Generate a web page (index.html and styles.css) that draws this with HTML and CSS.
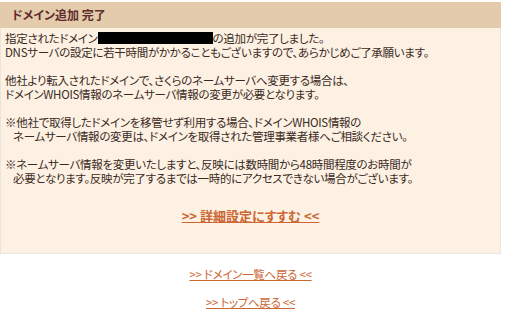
FILE: index.html
```html
<!DOCTYPE html>
<html lang="ja">

<head>
    <meta charset="UTF-8">
    <title>ドメイン追加 完了</title>
    <link rel="stylesheet" href="styles.css">
</head>

<body>
    <div class="result-box">
        <h3 class="result-title">ドメイン追加 完了</h3>
        <div class="result-body">
            <p>指定されたドメイン<span class="masked"></span>の追加が完了しました。<br>
                DNSサーバの設定に若干時間がかかることもございますので、あらかじめご了承願います。</p>
            <p>他社より転入されたドメインで、さくらのネームサーバへ変更する場合は、<br>
                ドメインWHOIS情報のネームサーバ情報の変更が必要となります。</p>
            <p>※他社で取得したドメインを移管せず利用する場合、ドメインWHOIS情報の<br>
                <span class="indent">ネームサーバ情報の変更は、ドメインを取得された管理事業者様へご相談ください。</span></p>
            <p>※ネームサーバ情報を変更いたしますと、反映には数時間から48時間程度のお時間が<br>
                <span class="indent">必要となります。反映が完了するまでは一時的にアクセスできない場合がございます。</span></p>
            <div class="next-step">
                <a href="#" class="next-link">&gt;&gt; 詳細設定にすすむ &lt;&lt;</a>
            </div>
        </div>
    </div>

    <!-- back links -->
    <div class="back-links">
        <a href="#">&gt;&gt; ドメイン一覧へ戻る &lt;&lt;</a>
        <a href="#">&gt;&gt; トップへ戻る &lt;&lt;</a>
    </div>
</body>

</html>
```

FILE: styles.css
```css
* {
    margin: 0;
    padding: 0;
    box-sizing: border-box;
}

body {
    font-family: "Noto Sans CJK JP", "Noto Sans", sans-serif;
    font-size: 11.5px;
    font-feature-settings: "palt";
    letter-spacing: -0.3px;
    color: #3a2a24;
    background-color: #ffffff;
    padding-top: 2px;
}

.result-box {
    width: 501px;
}

.result-title {
    height: 26px;
    padding-left: 12px;
    line-height: 26px;
    font-size: 12px;
    font-weight: bold;
    letter-spacing: 0;
    color: #5e2c2c;
    background-color: #e3cbab;
}

.result-body {
    background-color: #fdf1e3;
    border: 1px solid #ece4de;
    border-top: none;
    padding: 3px 4px 0 4px;
    height: 226px;
}

.result-body p {
    line-height: 14px;
    margin-bottom: 14px;
}

.masked {
    display: inline-block;
    width: 115px;
    height: 12px;
    background-color: #000000;
    vertical-align: -1px;
}

/* second line of a ※ note */
.indent {
    padding-left: 8px;
}

.next-step {
    text-align: center;
    margin-top: 21px;
}

.next-link {
    font-size: 13px;
    font-weight: bold;
    letter-spacing: 0;
    color: #cc6633;
}

.back-links {
    display: flex;
    flex-direction: column;
    align-items: center;
    gap: 12px;
    width: 501px;
    padding-top: 12px;
}

.back-links a {
    color: #cc6633;
    line-height: 16px;
}
```
